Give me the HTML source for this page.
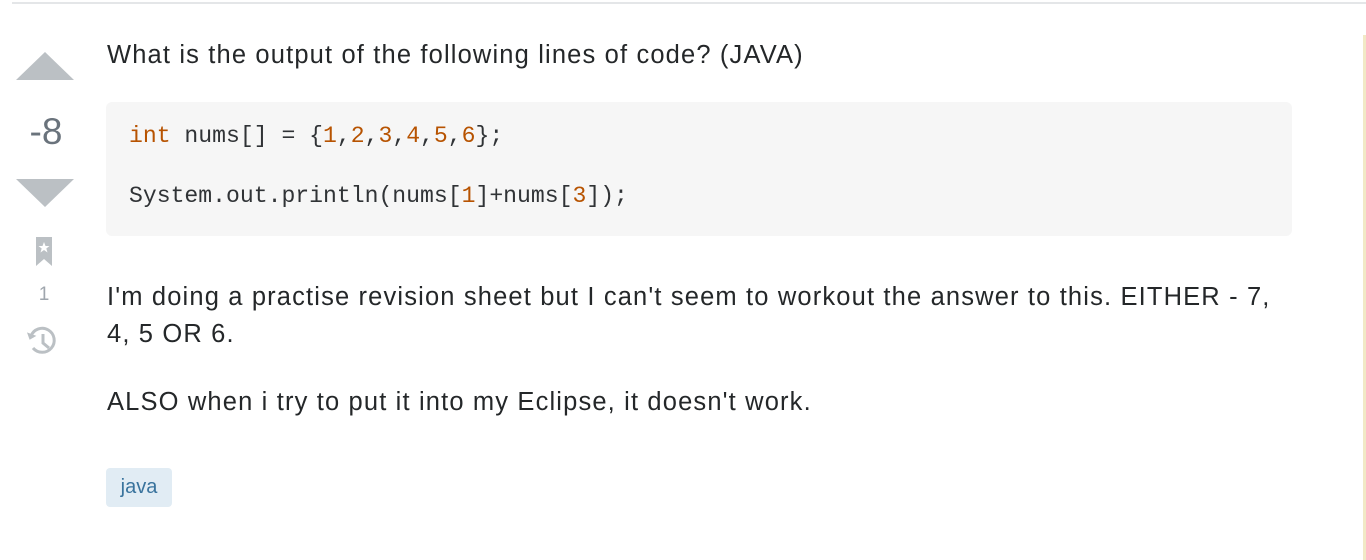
<!DOCTYPE html>
<html><head><style>
body{margin:0;width:1366px;height:560px;background:#fff;position:relative;overflow:hidden;font-family:"Liberation Sans",sans-serif;color:#242729}
.topline{position:absolute;left:12px;top:2px;width:1354px;height:2px;background:#e4e6e8}
.side{position:absolute;left:1363px;top:35px;width:3px;height:525px;background:#f1e9c6}
.t{position:absolute;left:107px;font-size:25.5px;letter-spacing:1.15px;white-space:nowrap}
.code{position:absolute;left:106px;top:102px;width:1186px;height:134px;background:#f6f6f6;border-radius:6px}
.cl{position:absolute;left:23px;font-family:"Liberation Mono",monospace;font-size:23.1px;color:#303336;white-space:pre}
.o{color:#b75301}
.tag{position:absolute;left:106px;top:468px;width:66px;height:39px;background:#e1ecf4;border-radius:4px;color:#39739d;font-size:20px;text-align:center;line-height:39px}
</style></head><body>
<div class="topline"></div><div class="side"></div>
<svg style="position:absolute;left:0;top:0" width="100" height="380">
<polygon points="16,80 74,80 45,52" fill="#bbc0c4"/>
<polygon points="16,179 74,179 45,207" fill="#bbc0c4"/>
<path d="M36,237 h16 v29 l-8,-7 l-8,7 z" fill="#bbc0c4"/>
<polygon points="44,242 45.5,246 49.5,246 46.3,248.5 47.5,252.5 44,250 40.5,252.5 41.7,248.5 38.5,246 42.5,246" fill="#fff"/>
<path d="M33,348 A12,12 0 1 0 31,336" fill="none" stroke="#bbc0c4" stroke-width="3"/>
<polygon points="26,334 36,334 31,340" fill="#bbc0c4" transform="rotate(20 31 336)"/>
<path d="M43,334 v9 l6,5" fill="none" stroke="#bbc0c4" stroke-width="3"/>
<text x="46" y="144" font-family="Liberation Sans" font-size="37" fill="#6a737c" text-anchor="middle">-8</text>
<text x="44" y="300" font-family="Liberation Sans" font-size="19" fill="#9fa6ad" text-anchor="middle">1</text>
</svg>
<div class="t" style="top:41px">What is the output of the following lines of code? (JAVA)</div>
<div class="code">
<div class="cl" style="top:21px"><span class="o">int</span> nums[] = {<span class="o">1</span>,<span class="o">2</span>,<span class="o">3</span>,<span class="o">4</span>,<span class="o">5</span>,<span class="o">6</span>};</div>
<div class="cl" style="top:81px">System.out.println(nums[<span class="o">1</span>]+nums[<span class="o">3</span>]);</div>
</div>
<div class="t" style="top:283px">I'm doing a practise revision sheet but I can't seem to workout the answer to this. EITHER - 7,</div>
<div class="t" style="top:320px">4, 5 OR 6.</div>
<div class="t" style="top:388px">ALSO when i try to put it into my Eclipse, it doesn't work.</div>
<div class="tag">java</div>
</body></html>
